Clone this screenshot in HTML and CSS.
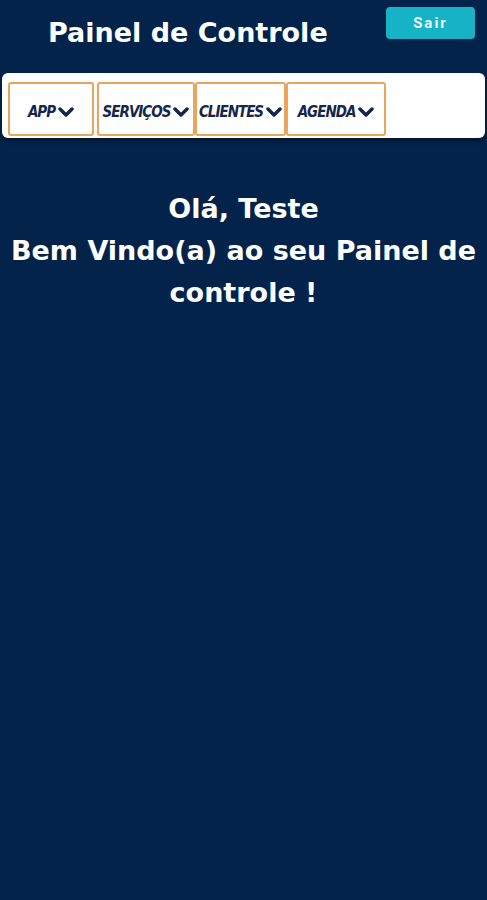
FILE: index.html
```html
<!DOCTYPE html>
<html lang="pt-BR">
<head>
    <meta charset="UTF-8">
    <title>Painel de Controle</title>
    <link rel="stylesheet" href="styles.css">
</head>
<body>
<!-- cabeçalho -->
<header class="topo">
    <h1 class="titulo">Painel de Controle</h1>
    <button class="btn-sair">Sair</button>
</header>

<!-- menu -->
<nav class="menu">
    <div class="menu-item item-app">APP <svg class="seta" viewBox="0 0 16 10"><polyline points="2,2 8,8 14,2"/></svg></div>
    <div class="menu-item item-servicos">SERVIÇOS <svg class="seta" viewBox="0 0 16 10"><polyline points="2,2 8,8 14,2"/></svg></div>
    <div class="menu-item item-clientes">CLIENTES <svg class="seta" viewBox="0 0 16 10"><polyline points="2,2 8,8 14,2"/></svg></div>
    <div class="menu-item item-agenda">AGENDA <svg class="seta" viewBox="0 0 16 10"><polyline points="2,2 8,8 14,2"/></svg></div>
</nav>

<main class="boas-vindas">
    <h2>Olá, Teste<br>Bem Vindo(a) ao seu Painel de controle !</h2>
</main>
</body>
</html>
```

FILE: styles.css
```css
* {
    margin: 0;
    padding: 0;
    box-sizing: border-box;
}

body {
    font-family: 'DejaVu Sans', Arial, sans-serif;
    background: #03234b;
    color: white;
    height: 100vh;
}

/* cabeçalho */
.topo {
    display: flex;
    justify-content: space-between;
    align-items: flex-start;
    padding: 7px 12px 0 48px;
    height: 73px;
}

.titulo {
    font-size: 27px;
    font-weight: 700;
    margin-top: 10px;
}

.btn-sair {
    width: 89px;
    height: 32px;
    background: #16b2c6;
    color: #eef9fb;
    border: none;
    border-radius: 4px;
    font-family: Roboto, Arial, sans-serif;
    font-weight: 700;
    font-size: 15px;
    letter-spacing: 2px;
}

/* menu */
.menu {
    margin: 0 2px;
    height: 65px;
    background: white;
    border-radius: 6px;
    display: flex;
    align-items: flex-end;
    padding: 0 0 2px 6px;
    box-shadow: 0 3px 4px rgba(0,0,0,0.4);
}

.menu-item {
    height: 54px;
    padding-top: 5px;
    border: 2px solid #eba45a;
    border-radius: 3px;
    display: flex;
    align-items: center;
    justify-content: center;
    gap: 3px;
    color: #14264a;
    font-stretch: condensed;
    font-style: italic;
    font-weight: 700;
    font-size: 15px;
    letter-spacing: -1px;
}

.item-app { width: 86px; margin-right: 3px; }
.item-servicos { width: 98px; }
.item-clientes { width: 91px; }
.item-agenda { width: 100px; }

.seta {
    width: 16px;
    height: 10px;
    fill: none;
    stroke: #14264a;
    stroke-width: 3.5;
    stroke-linecap: round;
    stroke-linejoin: round;
}

/* boas-vindas */
.boas-vindas {
    padding: 50px 8px 0;
    text-align: center;
}

.boas-vindas h2 {
    font-size: 27px;
    font-weight: 700;
    line-height: 42px;
}
```
